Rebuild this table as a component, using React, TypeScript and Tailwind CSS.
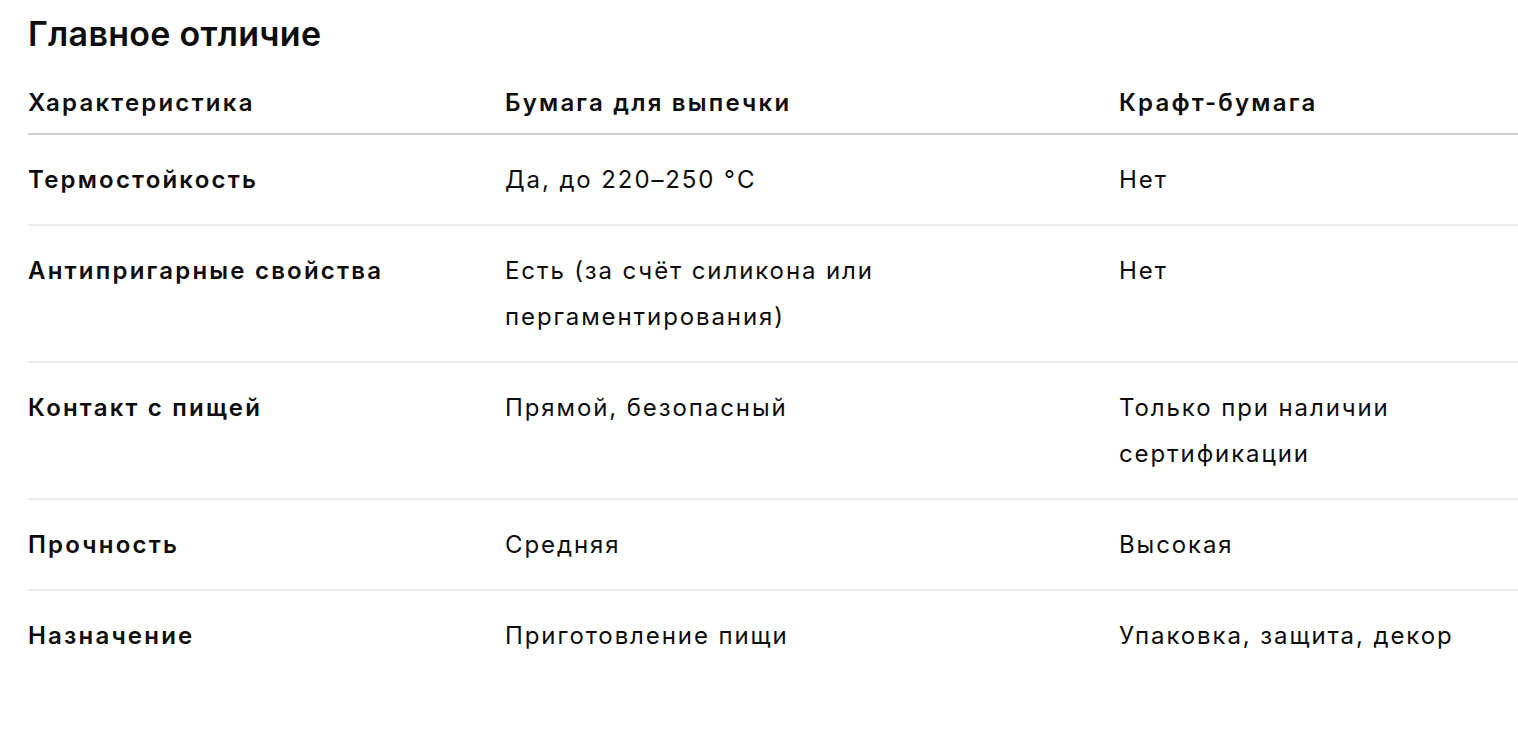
const ROWS: [string, string, string][] = [
  ["Термостойкость", "Да, до 220–250 °C", "Нет"],
  ["Антипригарные свойства", "Есть (за счёт силикона или пергаментирования)", "Нет"],
  ["Контакт с пищей", "Прямой, безопасный", "Только при наличии сертификации"],
  ["Прочность", "Средняя", "Высокая"],
  ["Назначение", "Приготовление пищи", "Упаковка, защита, декор"],
];

export default function App() {
  return (
    <div className="min-h-screen bg-white pl-[28px] pt-[13px] font-['Inter',sans-serif] text-[#0d0d0d]">
      <h3 className="text-[34px] font-semibold leading-[42px] tracking-[0.3px]">Главное отличие</h3>
      <table className="mt-[25px] w-[1490px] table-fixed border-collapse text-[24px] leading-[46px] tracking-[1.9px]">
        <colgroup>
          <col className="w-[477px]" />
          <col className="w-[614px]" />
          <col />
        </colgroup>
        <thead>
          <tr className="border-b-2 border-[#d0d0d0]">
            <th className="pb-[7px] pr-4 text-left font-semibold tracking-[2.2px]">Характеристика</th>
            <th className="pb-[7px] pr-4 text-left font-semibold tracking-[2.2px]">Бумага для выпечки</th>
            <th className="pb-[7px] text-left font-semibold tracking-[2.2px]">Крафт-бумага</th>
          </tr>
        </thead>
        <tbody>
          {ROWS.map((r, i) => (
            <tr key={r[0]} className={i < ROWS.length - 1 ? "border-b-2 border-[#ececec]" : ""}>
              <td className="pb-[21px] pr-4 pt-[22px] align-top font-semibold tracking-[2.2px]">{r[0]}</td>
              <td className="pb-[21px] pr-[150px] pt-[22px] align-top">{r[1]}</td>
              <td className="pb-[21px] pr-[40px] pt-[22px] align-top">{r[2]}</td>
            </tr>
          ))}
        </tbody>
      </table>
    </div>
  );
}
